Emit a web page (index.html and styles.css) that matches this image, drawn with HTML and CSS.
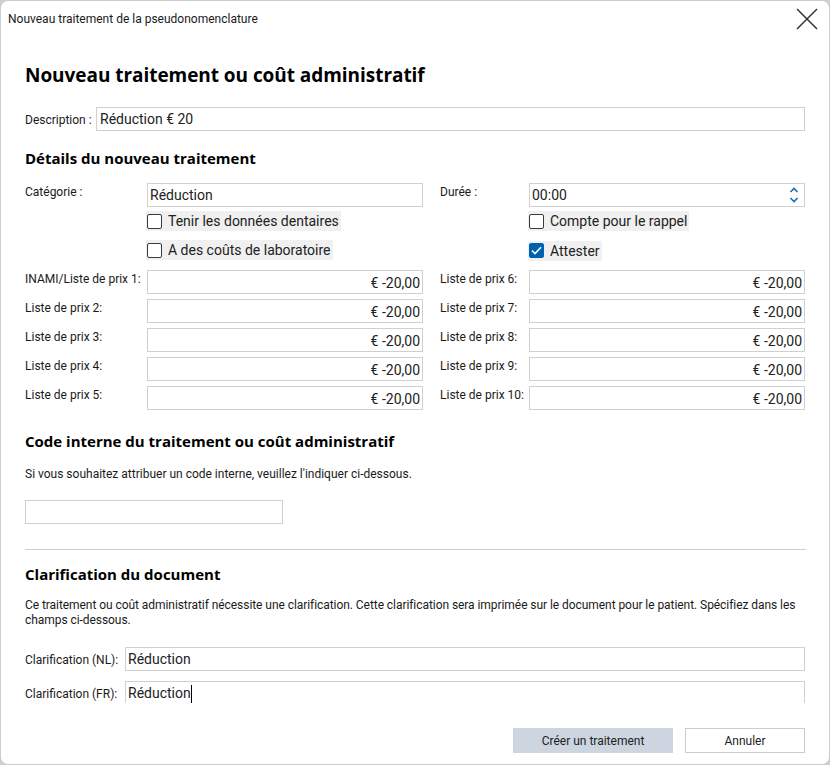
FILE: index.html
```html
<!DOCTYPE html>
<html lang="fr">
<head>
<meta charset="utf-8">
<title>Nouveau traitement de la pseudonomenclature</title>
<link rel="stylesheet" href="styles.css">
</head>
<body>
<div class="window">
  <div class="titlebar">
    <span class="title-text">Nouveau traitement de la pseudonomenclature</span>
    <svg class="close" width="22" height="22" viewBox="0 0 22 22"><path d="M1 1 L21 21 M21 1 L1 21" stroke="#333" stroke-width="1.5" fill="none"/></svg>
  </div>
  <div class="content">
    <h1 class="main-title">Nouveau traitement ou coût administratif</h1>
    <div class="desc-row">
      <span class="label desc-label">Description :</span>
      <div class="input input-text desc-input">Réduction € 20</div>
    </div>

    <h2 class="section-title">Détails du nouveau traitement</h2>
    <div class="details">
      <span class="label">Catégorie :</span>
      <div class="input input-text">Réduction</div>
      <span class="label rlabel">Durée :</span>
      <div class="input input-text spin">00:00
        <svg class="spinner" width="10" height="18" viewBox="0 0 10 18"><path d="M1.5 6 L5 2.5 L8.5 6" stroke="#1a6bb5" stroke-width="1.6" fill="none"/><path d="M1.5 12 L5 15.5 L8.5 12" stroke="#1a6bb5" stroke-width="1.6" fill="none"/></svg>
      </div>

      <span class="spacer"></span>
      <div class="chk-cell chk1"><span class="chk"><span class="box"></span>Tenir les données dentaires</span></div>
      <span class="spacer"></span>
      <div class="chk-cell chk1"><span class="chk"><span class="box"></span>Compte pour le rappel</span></div>

      <span class="spacer"></span>
      <div class="chk-cell chk2"><span class="chk"><span class="box"></span>A des coûts de laboratoire</span></div>
      <span class="spacer"></span>
      <div class="chk-cell chk2"><span class="chk"><span class="box checked"><svg width="11" height="9" viewBox="0 0 11 9"><path d="M1 4.5 L4 7.5 L10 1.2" stroke="#fff" stroke-width="1.6" fill="none"/></svg></span>Attester</span></div>

      <span class="label plabel first">INAMI/Liste de prix 1:</span>
      <div class="input price first">€ -20,00</div>
      <span class="label plabel rlabel first">Liste de prix 6:</span>
      <div class="input price first">€ -20,00</div>

      <span class="label plabel">Liste de prix 2:</span>
      <div class="input price">€ -20,00</div>
      <span class="label plabel rlabel">Liste de prix 7:</span>
      <div class="input price">€ -20,00</div>

      <span class="label plabel">Liste de prix 3:</span>
      <div class="input price">€ -20,00</div>
      <span class="label plabel rlabel">Liste de prix 8:</span>
      <div class="input price">€ -20,00</div>

      <span class="label plabel">Liste de prix 4:</span>
      <div class="input price">€ -20,00</div>
      <span class="label plabel rlabel">Liste de prix 9:</span>
      <div class="input price">€ -20,00</div>

      <span class="label plabel">Liste de prix 5:</span>
      <div class="input price">€ -20,00</div>
      <span class="label plabel rlabel">Liste de prix 10:</span>
      <div class="input price">€ -20,00</div>
    </div>

    <h2 class="section-title code-title">Code interne du traitement ou coût administratif</h2>
    <p class="note">Si vous souhaitez attribuer un code interne, veuillez l'indiquer ci-dessous.</p>
    <div class="input code-input"></div>

    <hr class="sep">

    <h2 class="section-title clar-title">Clarification du document</h2>
    <p class="note para">Ce traitement ou coût administratif nécessite une clarification. Cette clarification sera imprimée sur le document pour le patient. Spécifiez dans les champs ci-dessous.</p>
    <div class="clar-row nl">
      <span class="label clar-label">Clarification (NL):</span>
      <div class="input input-text clar-input">Réduction</div>
    </div>
    <div class="clar-row fr">
      <span class="label clar-label">Clarification (FR):</span>
      <div class="input input-text clar-input">Réduction<span class="caret"></span></div>
    </div>
  </div>
  <div class="footer">
    <button class="btn primary">Créer un traitement</button>
    <button class="btn">Annuler</button>
  </div>
</div>
</body>
</html>
```
FILE: styles.css
```css
* { box-sizing: border-box; }
html, body { margin: 0; padding: 0; }
body {
  background: #cfcfcf;
  width: 830px;
  height: 765px;
  overflow: hidden;
  font-family: "Roboto", sans-serif;
  color: #1a1a1a;
}
.window {
  width: 830px;
  height: 765px;
  background: #fff;
  border: 1px solid #cdcdcd;
  border-radius: 8px;
  display: flex;
  flex-direction: column;
  overflow: hidden;
}
.titlebar {
  height: 35px;
  flex: none;
  display: flex;
  align-items: center;
  justify-content: space-between;
  padding: 0 11px 0 7px;
}
.title-text {
  font-size: 12px;
  color: #1a1a1a;
  margin-top: 1px;
}
.close { margin-top: 1px; }
.content {
  height: 667px;
  flex: none;
  overflow: hidden;
  padding: 0 24px 0 24px;
}
.main-title {
  margin: 25px 0 0 0;
  font-family: "Open Sans", sans-serif;
  font-weight: 700;
  font-size: 19px;
  line-height: 28px;
  color: #000;
  letter-spacing: -0.05px;
}
.label {
  font-size: 12px;
  color: #1a1a1a;
  white-space: nowrap;
}
.input {
  height: 24px;
  border: 1px solid #d0d0d0;
  background: #fff;
}
.input-text {
  font-family: "Roboto", sans-serif;
  font-size: 14px;
  line-height: 22px;
  padding-left: 2px;
  color: #222;
}
.desc-row {
  display: flex;
  align-items: center;
  margin-top: 18px;
}
.desc-label { width: 71px; padding-top: 1px; }
.desc-input { flex: 1; padding-left: 3px; }
.section-title {
  margin: 17px 0 0 0;
  font-family: "Open Sans", sans-serif;
  font-weight: 700;
  font-size: 15px;
  line-height: 20px;
  color: #000;
  letter-spacing: 0;
}
.details {
  display: grid;
  grid-template-columns: 122px 276px 106px 276px;
  row-gap: 5px;
  margin-top: 15px;
}
.details .label { line-height: 19px; }
.rlabel { padding-left: 17px; }
.spin { position: relative; }
.spinner { position: absolute; right: 5px; top: 2px; }
.chk-cell { height: 20px; }
.chk1 { margin-top: -1px; }
.chk2 { margin-top: 4px; }
.chk {
  display: inline-flex;
  align-items: center;
  height: 20px;
  background: #f0f0f0;
  padding-right: 2px;
  margin-left: -1px;
  font-family: "Roboto", sans-serif;
  font-size: 14px;
  color: #222;
}
.box {
  width: 15px;
  height: 15px;
  border: 1.5px solid #3a3a3a;
  border-radius: 2px;
  margin: 0 6px 0 1px;
  display: flex;
  align-items: center;
  justify-content: center;
  background: #fff;
}
.box.checked {
  background: #0063b1;
  border-color: #0063b1;
}
.first { margin-top: 5px; }
.price {
  font-family: "Roboto", sans-serif;
  font-size: 14px;
  line-height: 24px;
  text-align: right;
  padding-right: 2px;
  color: #222;
}
.code-title { margin-top: 21px; }
.note {
  margin: 15px 0 0 0;
  font-size: 12px;
  line-height: 16px;
}
.code-input {
  width: 258px;
  margin-top: 18px;
}
.sep {
  margin: 25px 0 0 0;
  border: 0;
  border-top: 1px solid #d0d0d0;
  height: 0;
  width: 781px;
}
.clar-title { margin-top: 14px; }
.para {
  margin-top: 14px;
  line-height: 15px;
  letter-spacing: -0.06px;
}
.clar-row {
  display: flex;
  align-items: center;
}
.clar-row.nl { margin-top: 19px; }
.clar-row.fr { margin-top: 10px; }
.clar-label { width: 100px; padding-top: 1px; }
.clar-input { flex: 1; }
.caret {
  display: inline-block;
  width: 1px;
  height: 18px;
  background: #000;
  vertical-align: middle;
  margin-left: 0;
}
.footer {
  flex: 1;
  display: flex;
  justify-content: flex-end;
  align-items: flex-start;
  gap: 12px;
  padding: 25px 24px 0 0;
}
.btn {
  height: 25px;
  width: 120px;
  border: 1px solid #cccccc;
  background: #fff;
  font-family: "Roboto", sans-serif;
  font-size: 12px;
  color: #222;
  padding: 0;
}
.btn.primary {
  width: 160px;
  background: #ccd5e0;
  border-color: #ccd5e0;
}
```
